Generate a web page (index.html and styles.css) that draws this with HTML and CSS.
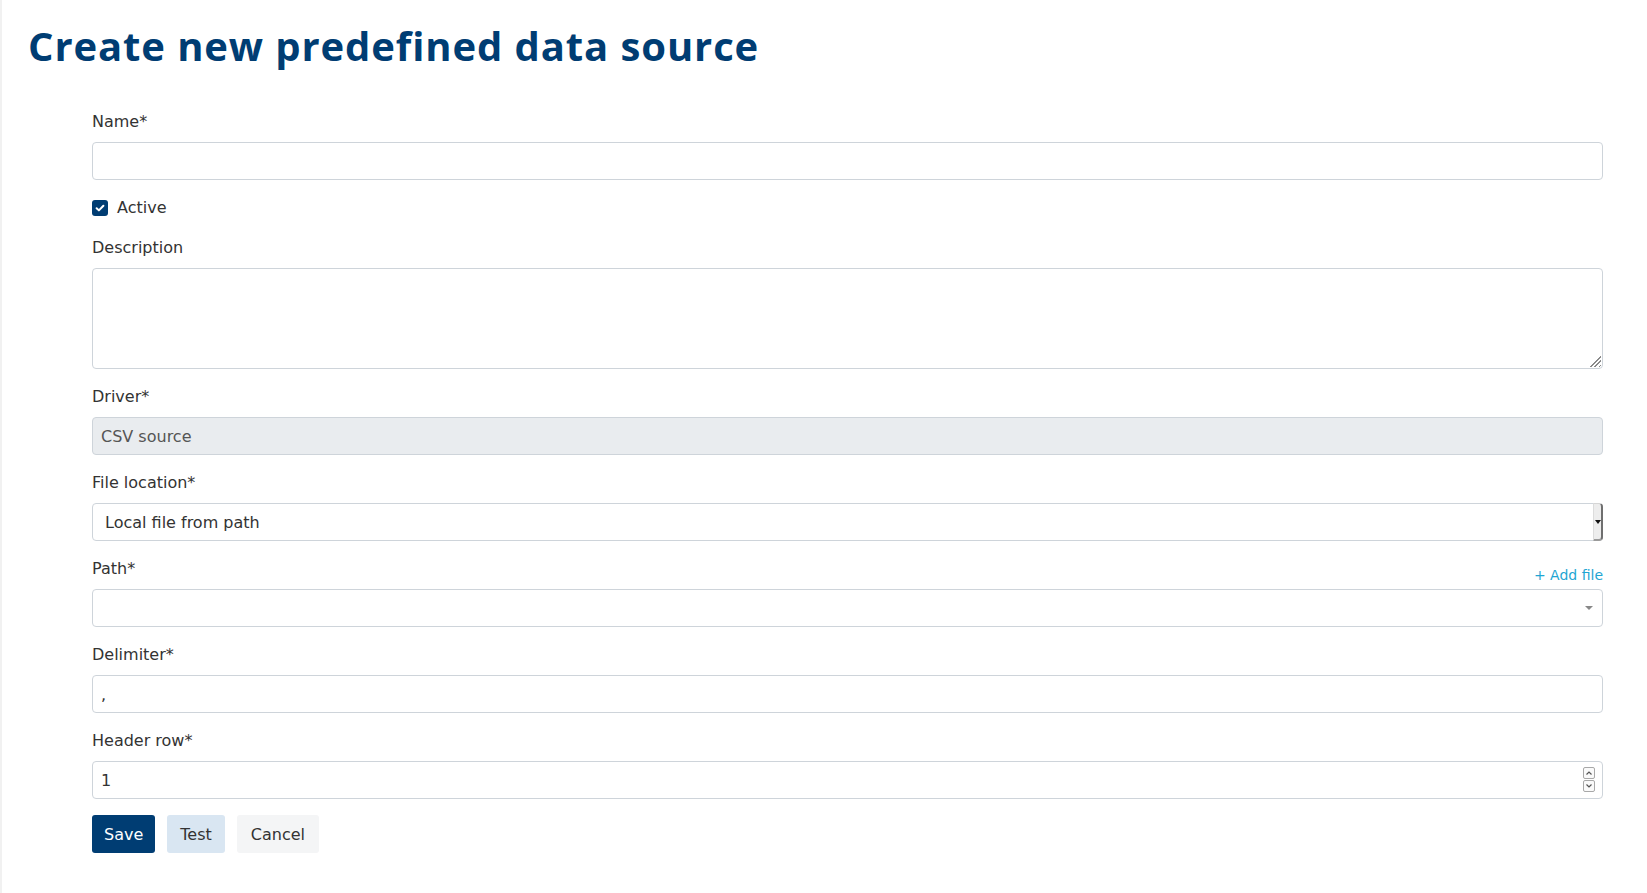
FILE: index.html
```html
<!DOCTYPE html>
<html lang="en">
<head>
<meta charset="utf-8">
<title>Create new predefined data source</title>
<link rel="stylesheet" href="styles.css">
</head>
<body>
<main class="page">
  <h1 class="page-title">Create new predefined data source</h1>
  <form class="form">
    <div class="group">
      <label class="label" for="name">Name*</label>
      <input class="control" id="name" type="text">
    </div>

    <div class="group check-row">
      <span class="checkbox">
        <svg width="16" height="16" viewBox="0 0 16 16"><path d="M4.6 8.2 L6.9 10.4 L11.4 5.8" fill="none" stroke="#fff" stroke-width="2" stroke-linecap="round" stroke-linejoin="round"/></svg>
      </span>
      <span class="check-label">Active</span>
    </div>

    <div class="group">
      <label class="label" for="desc">Description</label>
      <div class="field">
        <textarea class="control textarea" id="desc"></textarea>
        <span class="resize-grip"></span>
      </div>
    </div>

    <div class="group">
      <label class="label" for="driver">Driver*</label>
      <input class="control" id="driver" type="text" value="CSV source" disabled>
    </div>

    <div class="group">
      <label class="label" for="loc">File location*</label>
      <div class="field">
        <select class="control select" id="loc"><option>Local file from path</option></select>
        <span class="select-button">
          <svg width="6" height="4" viewBox="0 0 6 4"><path d="M0 0 H6 L3 4 Z" fill="#111"/></svg>
        </span>
      </div>
    </div>

    <div class="group">
      <div class="label-row">
        <label class="label label-inline" for="path">Path*</label>
        <a class="add-link" href="#">+ Add file</a>
      </div>
      <div class="field">
        <div class="control" id="path"></div>
        <span class="caret"></span>
      </div>
    </div>

    <div class="group">
      <label class="label" for="delim">Delimiter*</label>
      <input class="control" id="delim" type="text" value=",">
    </div>

    <div class="group">
      <label class="label" for="header">Header row*</label>
      <div class="field">
        <input class="control number" id="header" type="number" value="1">
        <span class="spinner">
          <span class="spin-btn"><svg width="8" height="6" viewBox="0 0 8 6"><path d="M1.5 4.5 L4 2 L6.5 4.5" fill="none" stroke="#555" stroke-width="1.2"/></svg></span>
          <span class="spin-btn"><svg width="8" height="6" viewBox="0 0 8 6"><path d="M1.5 1.5 L4 4 L6.5 1.5" fill="none" stroke="#555" stroke-width="1.2"/></svg></span>
        </span>
      </div>
    </div>

    <div class="actions">
      <button type="button" class="btn btn-primary">Save</button>
      <button type="button" class="btn btn-test">Test</button>
      <button type="button" class="btn btn-cancel">Cancel</button>
    </div>
  </form>
</main>
</body>
</html>
```

FILE: styles.css
```css
html, body {
  margin: 0;
  padding: 0;
  background: #fff;
}

body {
  font-family: "DejaVu Sans", "Liberation Sans", sans-serif;
  font-size: 16px;
  color: #333;
  box-shadow: inset 2px 0 0 #f1f1f1;
  min-height: 100vh;
}

.page {
  padding: 22px 44px 40px 28px;
}

.page-title {
  font-family: "Open Sans", "DejaVu Sans", sans-serif;
  font-weight: 700;
  font-size: 40px;
  line-height: 48px;
  letter-spacing: 0.9px;
  color: #003d73;
  margin: 0 0 40px;
}

.form {
  margin-left: 64px;
}

.group {
  margin-bottom: 16px;
}

.label {
  display: block;
  font-size: 16px;
  line-height: 24px;
  margin-bottom: 8px;
  color: #333;
}

.label-row {
  display: flex;
  justify-content: space-between;
  align-items: flex-end;
  margin-bottom: 8px;
}

.label-inline {
  margin-bottom: 0;
}

.add-link {
  font-size: 14px;
  line-height: 21px;
  margin-bottom: -5px;
  color: #1fa6d3;
  text-decoration: none;
}

.field {
  position: relative;
}

.control {
  display: block;
  width: 100%;
  box-sizing: border-box;
  height: 38px;
  margin: 0;
  padding: 0 8px;
  border: 1px solid #ced4da;
  border-radius: 4px;
  background: #fff;
  font-family: inherit;
  font-size: 16px;
  color: #333;
  outline: none;
}

.control:disabled {
  background: #e9ecef;
  color: #555;
  opacity: 1;
  -webkit-text-fill-color: #555;
}

.textarea {
  height: 101px;
  padding: 6px 8px;
  resize: none;
}

.resize-grip {
  position: absolute;
  right: 2px;
  bottom: 2px;
  width: 12px;
  height: 12px;
  background: repeating-linear-gradient(135deg, #8a8a8a 0 1px, transparent 1px 3px);
  clip-path: polygon(100% 0, 100% 100%, 0 100%);
}

.select {
  -webkit-appearance: none;
  appearance: none;
  padding: 0 12px;
}

.select-button {
  position: absolute;
  top: 0;
  right: 0;
  bottom: 0;
  width: 7px;
  box-sizing: content-box;
  background: #ededed;
  border-left: 1px solid #dcdcdc;
  border-right: 2px solid #6f6f6f;
  border-bottom: 2px solid #9a9a9a;
  border-top: 1px solid #d5d5d5;
  border-radius: 0 4px 4px 0;
  display: flex;
  align-items: center;
  justify-content: center;
}

.caret {
  position: absolute;
  right: 10px;
  top: 17px;
  width: 0;
  height: 0;
  border-left: 4px solid transparent;
  border-right: 4px solid transparent;
  border-top: 4px solid #888;
}

.number {
  -moz-appearance: textfield;
  appearance: textfield;
}

.number::-webkit-inner-spin-button,
.number::-webkit-outer-spin-button {
  -webkit-appearance: none;
  margin: 0;
}

.spinner {
  position: absolute;
  right: 8px;
  top: 6px;
  display: flex;
  flex-direction: column;
  gap: 1px;
}

.spin-btn {
  width: 10px;
  height: 10px;
  border: 1px solid #a8a8a8;
  border-radius: 2px;
  background: #fafafa;
  display: flex;
  align-items: center;
  justify-content: center;
}

.check-row {
  display: flex;
  align-items: center;
  height: 24px;
  gap: 9px;
}

.checkbox {
  width: 16px;
  height: 16px;
  border-radius: 3px;
  background: #003d73;
  display: flex;
}

.check-label {
  font-size: 16px;
  line-height: 24px;
}

.actions {
  display: flex;
  gap: 12px;
}

.btn {
  height: 38px;
  padding: 0 12px;
  border: none;
  border-radius: 3px;
  font-family: inherit;
  font-size: 16px;
  cursor: pointer;
}

.btn-primary {
  background: #003d73;
  color: #fff;
}

.btn-test {
  background: #d9e6f2;
  color: #333;
  padding: 0 13px;
}

.btn-cancel {
  background: #f4f5f6;
  color: #333;
  padding: 0 14px;
}
```
